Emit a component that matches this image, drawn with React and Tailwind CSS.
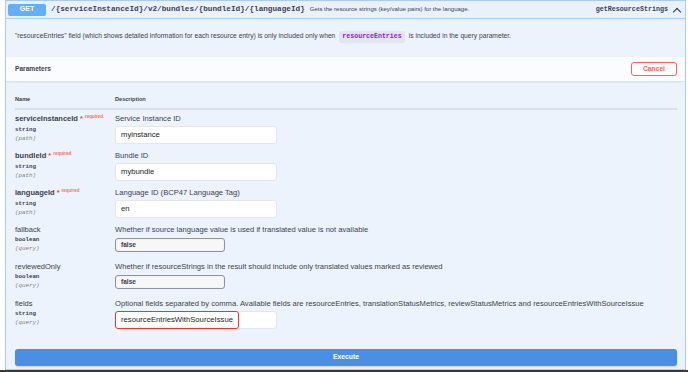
import React from "react";

const sans = { fontFamily: '"Liberation Sans", Arial, sans-serif' };

function Req() {
  return (
    <span className="text-[#f93e3e]">
      {"\u00a0*"}
      <span className="relative top-[-3px] ml-[2px] text-[4.5px] text-[#ff6b6b]">required</span>
    </span>
  );
}

function Row({ name, required, type, where, desc, children }) {
  return (
    <div className="flex h-[37px]">
      <div className="w-[100px] shrink-0 flex flex-col">
        <div className={`text-[7.5px] leading-[9px] text-[#3b4151] ${required ? "font-bold" : ""}`}>
          {name}
          {required && <Req />}
        </div>
        <div className="mt-[1px] font-['Liberation_Mono',monospace] font-bold text-[5.8px] leading-[9px] text-[#3b4151]">{type}</div>
        <div className="font-['Liberation_Mono',monospace] italic text-[5.8px] leading-[9px] text-[#808080]">({where})</div>
      </div>
      <div className="flex flex-col">
        <div className="text-[7.6px] leading-[9px] text-[#3b4151]">{desc}</div>
        {children}
      </div>
    </div>
  );
}

function TextInput({ value, highlight }) {
  return (
    <div className="relative mt-[3px] w-[162px] h-[18px] bg-white rounded-[3px] border border-[#e3e6ea] flex items-center pl-[5px] text-[7.7px] text-[#1b1b1b]">
      {value}
      {highlight && (
        <div className="absolute left-[-1px] top-[-1px] w-[124px] h-[18px] border-[1.5px] border-[#f0342c] rounded-[3px]" />
      )}
    </div>
  );
}

function Select() {
  return (
    <div className="mt-[4px] w-[110px] h-[14px] bg-[#f7f7f7] rounded-[3px] border border-[#8f939b] shadow-[inset_0_0_1px_rgba(0,0,0,0.2)] flex items-center pl-[5px] text-[6.6px] font-bold text-[#3b4151]">
      false
    </div>
  );
}

export default function App() {
  return (
    <div className="w-[688px] h-[372px] bg-white overflow-hidden flex flex-col" style={sans}>
      <div className="ml-[5px] mr-[2px] h-[370px] border border-[#a8cdf5] bg-[#ecf3fc] flex flex-col">
        {/* header */}
        <div className="h-[18px] shrink-0 border-b border-[#a8cdf5] bg-[#e8f1fc] flex items-center whitespace-nowrap">
          <div className="shrink-0 ml-[2px] w-[38px] h-[12px] rounded-[2px] bg-[#61affe] flex items-center justify-center text-white font-bold text-[7px]">
            GET
          </div>
          <div className="shrink-0 ml-[5px] font-['Liberation_Mono',monospace] font-bold text-[7.7px] text-[#3b4151]">
            /{"{serviceInstanceId}"}/v2/bundles/{"{bundleId}"}/{"{languageId}"}
          </div>
          <div className="shrink-0 ml-[5px] text-[6px] text-[#3b4151]">Gets the resource strings (key/value pairs) for the language.</div>
          <div className="flex-1" />
          <div className="shrink-0 font-['Liberation_Mono',monospace] font-bold text-[6.7px] text-[#3b4151]">getResourceStrings</div>
          <div className="shrink-0 w-[17px] h-[12px] flex items-center justify-center">
            <div className="w-[6px] h-[6px] mt-[4px] border-l-[1.5px] border-t-[1.5px] border-[#2b2f3a] rotate-45" />
          </div>
        </div>
        {/* description */}
        <div className="h-[38px] shrink-0 flex items-center pl-[9px] pb-[3px] text-[6.7px] text-[#3b4151]">
          "resourceEntries" field (which shows detailed information for each resource entry) is only included only when
          <span className="mx-[4px] px-[3px] h-[12px] flex items-center rounded-[2px] bg-[#e1e6ee] font-['Liberation_Mono',monospace] font-bold text-[6.6px] text-[#9012fe]">
            resourceEntries
          </span>
          is included in the query parameter.
        </div>
        {/* parameters bar */}
        <div className="h-[24px] shrink-0 bg-[#fafcff] shadow-[0_1px_2px_rgba(0,0,0,0.1)] flex items-center pl-[9px] pr-[8px]">
          <div className="font-bold text-[6.6px] text-[#3b4151]">Parameters</div>
          <div className="ml-auto w-[46px] h-[14px] rounded-[3px] border border-[#ff6060] bg-white flex items-center justify-center text-[6.7px] font-bold text-[#ff6060]">
            Cancel
          </div>
        </div>
        {/* table */}
        <div className="pl-[9px] pr-[8px] flex flex-col">
          <div className="mt-[14px] flex pb-[4px] border-b-2 border-[#d8dfe8] text-[5.6px] font-bold text-[#3b4151] leading-[9px]">
            <div className="w-[100px]">Name</div>
            <div>Description</div>
          </div>
          <div className="mt-[4px] flex flex-col">
            <Row name="serviceInstanceId" required type="string" where="path" desc="Service Instance ID">
              <TextInput value="myinstance" />
            </Row>
            <Row name="bundleId" required type="string" where="path" desc="Bundle ID">
              <TextInput value="mybundle" />
            </Row>
            <Row name="languageId" required type="string" where="path" desc="Language ID (BCP47 Language Tag)">
              <TextInput value="en" />
            </Row>
            <Row name="fallback" type="boolean" where="query" desc="Whether if source language value is used if translated value is not available">
              <Select />
            </Row>
            <Row name="reviewedOnly" type="boolean" where="query" desc="Whether if resourceStrings in the result should include only translated values marked as reviewed">
              <Select />
            </Row>
            <Row name="fields" type="string" where="query" desc="Optional fields separated by comma. Available fields are resourceEntries, translationStatusMetrics, reviewStatusMetrics and resourceEntriesWithSourceIssue">
              <TextInput value="resourceEntriesWithSourceIssue" highlight />
            </Row>
          </div>
          <div className="mt-[13px] h-[17px] rounded-[3px] bg-[#4990e2] flex items-center justify-center text-white font-bold text-[6.8px] shadow-[0_1px_2px_rgba(0,0,0,0.15)]">
            Execute
          </div>
        </div>
      </div>
      <div className="h-[2px] bg-[#3a3a3a]" />
    </div>
  );
}
